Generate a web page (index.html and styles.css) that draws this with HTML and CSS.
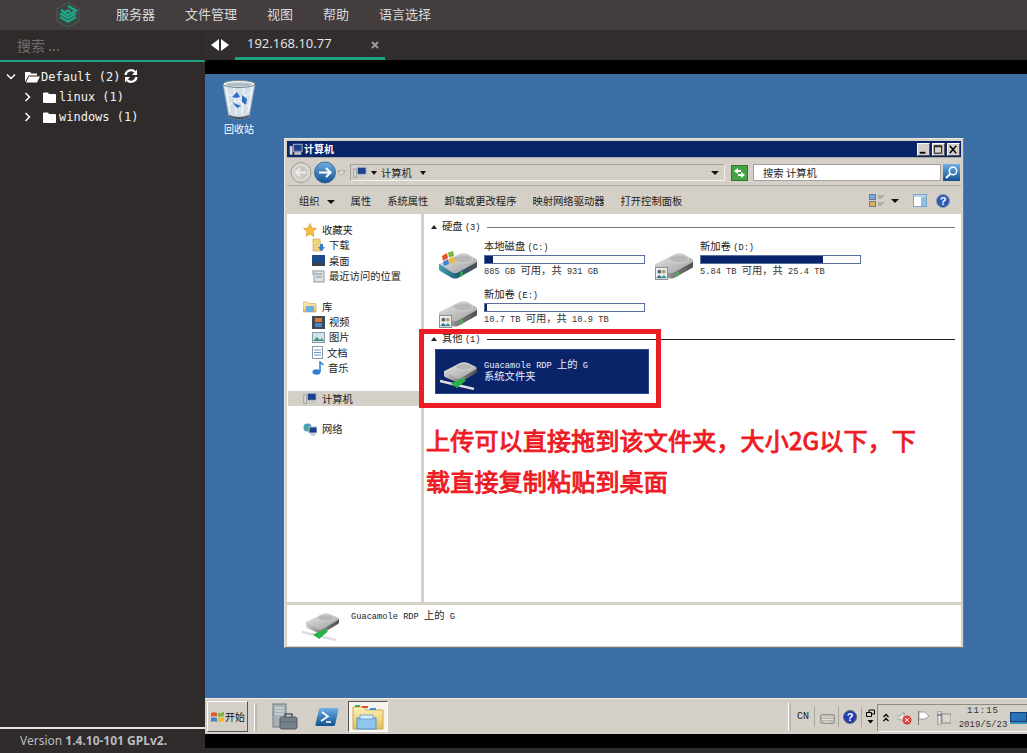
FILE: index.html
```html
<!DOCTYPE html>
<html lang="zh-CN">
<head>
<meta charset="utf-8">
<title>192.168.10.77</title>
<link rel="stylesheet" href="styles.css">
</head>
<body>
<svg class="defs" width="0" height="0" aria-hidden="true">
  <defs>
    <linearGradient id="gDrive" x1="0" y1="0" x2="1" y2="1"><stop offset="0" stop-color="#e8e8e8"/><stop offset="1" stop-color="#9c9c9c"/></linearGradient>
    <linearGradient id="gSide" x1="0" y1="0" x2="1" y2="0"><stop offset="0" stop-color="#d0d0d0"/><stop offset=".5" stop-color="#7d7d7d"/><stop offset="1" stop-color="#4f4f4f"/></linearGradient>
    <linearGradient id="gTeal" x1="0" y1="0" x2="1" y2="0"><stop offset="0" stop-color="#4aa0b8"/><stop offset=".5" stop-color="#1f5f78"/><stop offset="1" stop-color="#4f4f4f"/></linearGradient>
    <linearGradient id="gBlue" x1="0" y1="0" x2="0" y2="1"><stop offset="0" stop-color="#6fb0e6"/><stop offset="1" stop-color="#12508f"/></linearGradient>
    <linearGradient id="gFolder" x1="0" y1="0" x2="0" y2="1"><stop offset="0" stop-color="#fff2b8"/><stop offset="1" stop-color="#e4bf5c"/></linearGradient>
    <symbol id="drive" viewBox="0 0 40 30">
      <path d="M1 13 V18 Q1 19 2 20 L14 27 Q17 28 20 27 L38 17 Q39 16.500 39 15 V10Z" fill="url(#gSide)"/>
      <path d="M1.500 13 L21 3 Q26 1.500 30 3 L38 8 Q40 10 38 11.500 L20 21.500 Q17 23 14 21.500Z" fill="url(#gDrive)"/>
      <ellipse cx="25" cy="8" rx="10" ry="4" fill="#b8b8b8" stroke="#dedede" stroke-width=".6"/>
      <rect x="22.500" y="20.500" width="2" height="5" fill="#3fc24a"/>
    </symbol>
    <symbol id="driveC" viewBox="0 0 40 30">
      <path d="M1 13 V18 Q1 19 2 20 L14 27 Q17 28 20 27 L38 17 Q39 16.500 39 15 V10Z" fill="url(#gTeal)"/>
      <path d="M1.500 13 L21 3 Q26 1.500 30 3 L38 8 Q40 10 38 11.500 L20 21.500 Q17 23 14 21.500Z" fill="url(#gDrive)"/>
      <ellipse cx="25" cy="8" rx="10" ry="4" fill="#b8b8b8" stroke="#dedede" stroke-width=".6"/>
      <rect x="22.500" y="20.500" width="2" height="5" fill="#3fc24a"/>
    </symbol>
    <symbol id="share" viewBox="0 0 14 14">
      <rect x=".5" y=".5" width="13" height="13" fill="#eef0ee" stroke="#8a8a8a"/>
      <circle cx="4.800" cy="5" r="2.100" fill="#4f6a80"/><circle cx="9.500" cy="5" r="2.100" fill="#b59a6a"/>
      <path d="M1.500 12 Q4.500 6 7.500 12Z" fill="#3a6ea5"/><path d="M6.500 12 Q9.500 6 12.500 12Z" fill="#3d9c8b"/>
    </symbol>
    <symbol id="netdrive" viewBox="0 0 38 30">
      <path d="M5 11 V15 Q5 16 6 17 L17 22 Q19 23 22 22 L37 13 Q38 12.500 38 11 V8Z" fill="url(#gSide)"/>
      <path d="M5.500 11 L21 3 Q25 1.500 29 3 L36.500 6.500 Q38.500 8 36.500 9.500 L22 18 Q19 19.500 16.500 18Z" fill="url(#gDrive)"/>
      <ellipse cx="25" cy="7" rx="8.500" ry="3.300" fill="#b8b8b8" stroke="#dedede" stroke-width=".6"/>
      <rect x="23.500" y="17.500" width="1.800" height="4" fill="#3fc24a"/>
      <path d="M1 21 L35 29" stroke="#dedede" stroke-width="2.400"/>
      <path d="M12 23.500 L23 18.500 L27 20.500 L18 28Z" fill="#27b34a"/>
    </symbol>
    <symbol id="pc" viewBox="0 0 16 14">
      <rect x="5" y="1" width="10" height="8" fill="#1e3f8c" stroke="#b8c0cc"/>
      <rect x="1" y="3" width="3" height="10" fill="#dedede" stroke="#7d7d7d" stroke-width=".7"/>
      <rect x="6" y="10" width="8" height="3" fill="#c8c8c8"/>
    </symbol>
  </defs>
</svg>

<div class="app">
  <header class="topbar">
    <div class="logo">
      <svg width="24" height="26" viewBox="0 0 24 26">
        <path d="M12 .5 L23 6.700 V19.300 L12 25.500 L1 19.300 V6.700Z" fill="#3a4541" stroke="#4d5a55"/>
        <path d="M12 4 L20 8.500 L12 13 L8 10.800 L12 8.600 L14 9.600" fill="none" stroke="#1fa888" stroke-width="2.300"/>
        <path d="M4 11.500 L12 16 L20 11.500 M4 15 L12 19.500 L20 15 M5 8 L9 10.200" fill="none" stroke="#1fa888" stroke-width="2.300"/>
      </svg>
    </div>
    <nav class="menu">
      <span>服务器</span><span>文件管理</span><span>视图</span><span>帮助</span><span>语言选择</span>
    </nav>
  </header>

  <aside class="sidebar">
    <div class="search">搜索 ...</div>
    <ul class="tree">
      <li class="tree-row">
        <svg class="chev" width="10" height="8" viewBox="0 0 10 8"><path d="M1 1.500 L5 5.500 L9 1.500" fill="none" stroke="#fff" stroke-width="1.500"/></svg>
        <svg class="folder" width="15" height="12" viewBox="0 0 15 12"><path d="M0 11 V1 H5 L6.500 2.500 H12 V4.500 H3.500 Z" fill="#fff"/><path d="M1 11.500 L4 5.500 H15 L12 11.500Z" fill="#fff"/></svg>
        <span>Default (2)</span>
        <svg class="sync" width="14" height="14" viewBox="0 0 14 14"><path d="M1.500 6 A5.500 5.500 0 0 1 11 3 M12.500 8 A5.500 5.500 0 0 1 3 11" fill="none" stroke="#fff" stroke-width="2.200"/><path d="M13 .5 V6 H8Z M1 13.500 V8 H6Z" fill="#fff"/></svg>
      </li>
      <li class="tree-row sub">
        <svg class="chev" width="8" height="10" viewBox="0 0 8 10"><path d="M1.500 1 L5.500 5 L1.500 9" fill="none" stroke="#fff" stroke-width="1.500"/></svg>
        <svg class="folder" width="13" height="11" viewBox="0 0 13 11"><path d="M0 10 Q0 11 1 11 H12 Q13 11 13 10 V3 Q13 2 12 2 H6 L5 .5 H1 Q0 .5 0 1.500Z" fill="#fff"/></svg>
        <span>linux (1)</span>
      </li>
      <li class="tree-row sub">
        <svg class="chev" width="8" height="10" viewBox="0 0 8 10"><path d="M1.500 1 L5.500 5 L1.500 9" fill="none" stroke="#fff" stroke-width="1.500"/></svg>
        <svg class="folder" width="13" height="11" viewBox="0 0 13 11"><path d="M0 10 Q0 11 1 11 H12 Q13 11 13 10 V3 Q13 2 12 2 H6 L5 .5 H1 Q0 .5 0 1.500Z" fill="#fff"/></svg>
        <span>windows (1)</span>
      </li>
    </ul>
    <footer class="version">Version <b>1.4.10-101 GPLv2.</b></footer>
  </aside>

  <main class="session">
    <div class="tabs">
      <div class="arrows">
        <svg width="8" height="12" viewBox="0 0 8 12"><path d="M8 0 V12 L0 6Z" fill="#fff"/></svg>
        <svg width="8" height="12" viewBox="0 0 8 12"><path d="M0 0 V12 L8 6Z" fill="#fff"/></svg>
      </div>
      <div class="tab"><span>192.168.10.77</span><svg width="8" height="8" viewBox="0 0 8 8"><path d="M1 1 L7 7 M7 1 L1 7" stroke="#9a9a9a" stroke-width="2"/></svg></div>
    </div>
    <div class="band"></div>

    <div class="desktop">
      <div class="wallpaper">
        <div class="recycle">
          <svg width="36" height="42" viewBox="0 0 36 42">
            <path d="M2 5 L8 38 Q18 42 28 38 L34 5Z" fill="#d3dee6" stroke="#9fb1be" stroke-width=".7"/>
            <path d="M5 8 L9 33 M31 8 L27 33 M13 9 L15 36 M23 9 L21 36 M5 14 L18 20 L31 13 M7 26 L18 22 L29 28" stroke="#f2f6f8" stroke-width="1.300" fill="none"/>
            <ellipse cx="18" cy="5" rx="16" ry="3.500" fill="#eef2f4" stroke="#75868f"/>
            <ellipse cx="18" cy="5.500" rx="13" ry="2" fill="#aebcc5"/>
            <path d="M8 36 Q18 40 28 36 L28 38 Q18 42.500 8 38Z" fill="#4c565f"/>
            <path d="M11 18 L16 13 L19 18 L15 19Z M21 16 L26 20 L25 26 L21 23Z M11 23 L16 29 L20 27 L15 25Z" fill="#2f6ccb"/>
          </svg>
          <span>回收站</span>
        </div>

        <section class="window">
          <div class="titlebar">
            <svg class="t-ico" width="14" height="13"><use href="#pc"/></svg>
            <span class="t-text">计算机</span>
            <div class="winbtns">
              <span class="winbtn"><svg width="13" height="11" viewBox="0 0 13 11"><rect x="3" y="8" width="6" height="2" fill="#000"/></svg></span>
              <span class="winbtn"><svg width="13" height="11" viewBox="0 0 13 11"><path d="M2.500 1.500 H10.500 V9.500 H2.500Z M2.500 2.500 H10.500" fill="none" stroke="#000"/></svg></span>
              <span class="winbtn"><svg width="13" height="11" viewBox="0 0 13 11"><path d="M3 1.500 L10 9.500 M10 1.500 L3 9.500" stroke="#000" stroke-width="1.600"/></svg></span>
            </div>
          </div>

          <div class="navbar">
            <svg class="navbtns" width="56" height="23" viewBox="0 0 56 23">
              <circle cx="11" cy="11.500" r="10" fill="#d9d7d2" stroke="#9d9d9d"/>
              <circle cx="11" cy="11.500" r="6.500" fill="#c9c7c2"/>
              <path d="M6 11.500 H16 M10 7.500 L6 11.500 L10 15.500" fill="none" stroke="#eee" stroke-width="2"/>
              <circle cx="35" cy="11.500" r="10.500" fill="url(#gBlue)" stroke="#3d6d9c"/>
              <path d="M29 11.500 H40 M36 7 L40.500 11.500 L36 16" fill="none" stroke="#fff" stroke-width="2.200"/>
              <path d="M48 10 H55 L51.500 14Z" fill="#f2f2f2" stroke="#888" stroke-width=".7"/>
            </svg>
            <div class="address">
              <svg width="14" height="13"><use href="#pc"/></svg>
              <i class="caret"></i>
              <span>计算机</span>
              <i class="caret"></i>
              <i class="caret end"></i>
            </div>
            <span class="go"><svg width="17" height="16" viewBox="0 0 17 16"><rect x=".5" y=".5" width="16" height="15" fill="#45a345" stroke="#2f7a2f"/><path d="M3 6 L7 3 V5 H10 V7 H7 V9Z M14 10 L10 13 V11 H7 V9 H10 V7Z" fill="#fff"/></svg></span>
            <div class="searchbox">搜索 计算机</div>
            <span class="searchbtn"><svg width="17" height="17" viewBox="0 0 17 17"><rect width="17" height="17" fill="url(#gBlue)"/><circle cx="10" cy="7" r="3.700" fill="none" stroke="#fff" stroke-width="1.500"/><path d="M7 10 L3 14" stroke="#fff" stroke-width="2"/></svg></span>
          </div>

          <div class="cmdbar">
            <span class="cmd">组织<i class="caret wide"></i></span>
            <span class="cmd">属性</span>
            <span class="cmd">系统属性</span>
            <span class="cmd">卸载或更改程序</span>
            <span class="cmd">映射网络驱动器</span>
            <span class="cmd">打开控制面板</span>
            <div class="cmd-right">
              <svg width="16" height="13" viewBox="0 0 16 13"><rect x=".5" y=".5" width="6" height="5" fill="#6fa8dc" stroke="#778"/><rect x=".5" y="7.500" width="6" height="5" fill="#d9b45b" stroke="#778"/><path d="M9 2 H15 M9 4 H13 M9 9 H15 M9 11 H13" stroke="#8b8b8b"/></svg>
              <i class="caret"></i>
              <svg class="cr-panel" width="14" height="13" viewBox="0 0 14 13"><rect x=".5" y=".5" width="13" height="12" fill="#fff" stroke="#7da2c4"/><rect x="8" y="1" width="5" height="11" fill="#8cc3e4"/><rect x="1" y="1" width="12" height="2" fill="#b9d5e9"/></svg>
              <svg class="cr-help" width="14" height="14" viewBox="0 0 14 14"><circle cx="7" cy="7" r="6.500" fill="#2f58b5" stroke="#8a93a8"/><text x="7" y="11" text-anchor="middle" class="qmark">?</text></svg>
            </div>
          </div>

          <div class="panes">
            <div class="navpane">
              <div class="np-row top"><svg width="14" height="14" viewBox="0 0 14 14"><path d="M7 .5 L9 5 L13.500 5.500 L10 8.500 L11 13.500 L7 11 L3 13.500 L4 8.500 L.5 5.500 L5 5Z" fill="#f2c03e" stroke="#d88b20" stroke-width=".6"/></svg><span>收藏夹</span></div>
              <div class="np-row child"><svg width="13" height="14" viewBox="0 0 13 14"><path d="M1 1 H8 L9 13 H1Z" fill="#efd27b" stroke="#c0a050" stroke-width=".6"/><path d="M8 6 H11 V9 H13 L9.500 13.500 L6 9 H8Z" fill="#2f7fcf"/></svg><span>下载</span></div>
              <div class="np-row child"><svg width="13" height="11" viewBox="0 0 13 11"><rect width="13" height="11" fill="#1d4a8a"/><rect y="8" width="13" height="3" fill="#3a3f45"/></svg><span>桌面</span></div>
              <div class="np-row child"><svg width="13" height="13" viewBox="0 0 13 13"><rect x="2" y="1" width="10" height="11" fill="#dfe3e6" stroke="#8d979f"/><path d="M4 4 H10 M4 7 H10" stroke="#7e8a92"/><rect y="0" width="4" height="5" fill="#b9c4cc"/></svg><span>最近访问的位置</span></div>
              <div class="np-row top gap"><svg width="14" height="13" viewBox="0 0 14 13"><path d="M0 2 H5 L6 3.500 H13 V12 H0Z" fill="url(#gFolder)" stroke="#c0a050" stroke-width=".6"/><rect x="3" y="6" width="8" height="6" fill="#6eb0dc"/></svg><span>库</span></div>
              <div class="np-row child"><svg width="13" height="13" viewBox="0 0 13 13"><rect width="13" height="13" fill="#3c4a55"/><rect x="3" y="2" width="7" height="4" fill="#d97c35"/><rect x="3" y="7" width="7" height="4" fill="#4f86c6"/></svg><span>视频</span></div>
              <div class="np-row child"><svg width="13" height="11" viewBox="0 0 13 11"><rect x=".5" y=".5" width="12" height="10" fill="#cfe3ef" stroke="#8a9aa6"/><path d="M1 9 L5 5 L8 8 L10 6 L12 9Z" fill="#4c8f6b"/></svg><span>图片</span></div>
              <div class="np-row child"><svg width="11" height="13" viewBox="0 0 11 13"><rect x=".5" y=".5" width="10" height="12" fill="#fff" stroke="#8a9aa6"/><path d="M2 4 H9 M2 6.500 H9 M2 9 H9" stroke="#6f9ccc"/></svg><span>文档</span></div>
              <div class="np-row child"><svg width="12" height="14" viewBox="0 0 12 14"><ellipse cx="4.500" cy="11" rx="4" ry="2.700" fill="#2f7fcf"/><path d="M8 11 V1 L11.500 4" fill="none" stroke="#2f7fcf" stroke-width="1.500"/></svg><span>音乐</span></div>
              <div class="np-row top gap selected"><svg width="14" height="13"><use href="#pc"/></svg><span>计算机</span></div>
              <div class="np-row top gap"><svg width="14" height="13" viewBox="0 0 14 13"><circle cx="4.500" cy="4.500" r="4" fill="#3f9ad6"/><path d="M2 3 L5 2 L6 6 L3 7Z" fill="#58ad5b"/><rect x="6" y="4" width="8" height="6" fill="#1e3f8c" stroke="#b8c0cc"/><rect x="8" y="10.500" width="4" height="2" fill="#b8c0cc"/></svg><span>网络</span></div>
            </div>

            <div class="content">
              <div class="group-head"><i class="tri"></i><span>硬盘 <em>(3)</em></span><hr></div>
              <div class="drives">
                <div class="drive">
                  <svg class="drive-ico" width="40" height="30" viewBox="0 0 40 30">
                    <use href="#driveC" width="40" height="30"/>
                    <path d="M4 5 L9 2 L10 7 L5 10Z" fill="#e2552b"/><path d="M10 1.500 L15 0 L16 5 L11 6.500Z" fill="#7ab53c"/><path d="M5 11 L10 8 L11 13 L6 15Z" fill="#3c84d2"/><path d="M11 7.500 L16 6 L17 11 L12 12.500Z" fill="#f1b92c"/>
                  </svg>
                  <div class="info"><div class="name">本地磁盘 <span class="lat">(C:)</span></div><div class="bar"><i style="width:5%"></i></div><div class="free"><span class="lat">885 GB </span>可用，共<span class="lat"> 931 GB</span></div></div>
                </div>
                <div class="drive">
                  <svg class="drive-ico" width="40" height="30" viewBox="0 0 40 30">
                    <use href="#drive" width="40" height="30"/><use href="#share" x="1" y="16" width="13" height="13"/>
                  </svg>
                  <div class="info"><div class="name">新加卷 <span class="lat">(D:)</span></div><div class="bar"><i style="width:77%"></i></div><div class="free"><span class="lat">5.84 TB </span>可用，共<span class="lat"> 25.4 TB</span></div></div>
                </div>
                <div class="drive">
                  <svg class="drive-ico" width="40" height="30" viewBox="0 0 40 30">
                    <use href="#drive" width="40" height="30"/><use href="#share" x="1" y="16" width="13" height="13"/>
                  </svg>
                  <div class="info"><div class="name">新加卷 <span class="lat">(E:)</span></div><div class="bar"><i style="width:1%"></i></div><div class="free"><span class="lat">10.7 TB </span>可用，共<span class="lat"> 10.9 TB</span></div></div>
                </div>
              </div>
              <div class="group-head other"><i class="tri"></i><span>其他 <em>(1)</em></span><hr></div>
              <div class="sel-tile">
                <svg width="38" height="30"><use href="#netdrive"/></svg>
                <div class="sel-text"><div><span class="lat">Guacamole RDP </span>上的<span class="lat"> G</span></div><div>系统文件夹</div></div>
              </div>
            </div>
          </div>

          <div class="details">
            <svg class="det-ico" width="38" height="30"><use href="#netdrive"/></svg>
            <div class="det-text"><span class="lat">Guacamole RDP </span>上的<span class="lat"> G</span></div>
          </div>
        </section>

        <div class="redbox"></div>
        <p class="note">上传可以直接拖到该文件夹，大小2G以下，下<br>载直接复制粘贴到桌面</p>
      </div>

      <div class="taskbar">
        <button class="start">
          <svg width="13" height="12" viewBox="0 0 13 12"><path d="M0 2 Q3 .5 6 2 V5.500 Q3 4.500 0 6Z" fill="#e2552b"/><path d="M7 2 Q10 3 13 .5 V4.500 Q10 6.500 7 5.500Z" fill="#7ab53c"/><path d="M0 7 Q3 5.500 6 7 V11 Q3 9.500 0 11Z" fill="#3c84d2"/><path d="M7 6.500 Q10 7.500 13 5.500 V9.500 Q10 11.500 7 10.500Z" fill="#f1b92c"/></svg>
          <span>开始</span>
        </button>
        <i class="tb-sep"></i>
        <svg class="tb-server" width="26" height="28" viewBox="0 0 26 28"><rect x="1" y="1" width="13" height="23" fill="#a9b2b8" stroke="#6f7a82"/><path d="M3 5 H12 M3 8 H12 M3 11 H12" stroke="#e2e6e8"/><rect x="8" y="14" width="17" height="12" rx="2" fill="#76828b" stroke="#4f5961"/><path d="M13 14 V11 H20 V14" fill="none" stroke="#4f5961" stroke-width="1.500"/><path d="M8 19 H25" stroke="#5a646c"/></svg>
        <svg class="tb-ps" width="24" height="20" viewBox="0 0 24 20"><path d="M6 1 H22 Q24 1 23.500 3 L20 18 Q19.500 19 18 19 H2 Q0 19 .5 17 L4 2 Q4.500 1 6 1Z" fill="url(#gBlue)"/><path d="M7 5 L13 9.500 L6 14 M11 15 H16" fill="none" stroke="#fff" stroke-width="1.600"/></svg>
        <span class="tb-active"><svg width="32" height="26" viewBox="0 0 32 26"><path d="M1 3 H12 L14 6 H31 V25 H1Z" fill="url(#gFolder)" stroke="#c9a850"/><rect x="3" y="1" width="5" height="2" fill="#3fb04a"/><rect x="10" y="2" width="6" height="2" fill="#d9523a"/><rect x="18" y="4" width="6" height="2" fill="#3f8fd9"/><rect x="5" y="14" width="19" height="11" fill="#8ec6ec" stroke="#4f93cc"/><rect x="8" y="11" width="13" height="4" fill="#d5eafa" stroke="#4f93cc" stroke-width=".7"/></svg></span>
        <div class="tb-spacer"></div>
        <i class="tb-sep"></i>
        <span class="lang">CN</span>
        <i class="tb-thin"></i>
        <svg class="tb-kbd" width="15" height="14" viewBox="0 0 15 14"><rect x=".5" y="4.500" width="14" height="9" rx="1" fill="#b9b6af" stroke="#989590"/><path d="M2 7 H13 M2 9.500 H13 M4 12 H11 M8 4 L11 1" stroke="#e5e3de"/></svg>
        <i class="tb-thin"></i>
        <svg class="tb-help" width="14" height="14" viewBox="0 0 14 14"><circle cx="7" cy="7" r="6.500" fill="#1e3db5" stroke="#6a6a6a"/><text x="7" y="11" text-anchor="middle" class="qmark">?</text></svg>
        <i class="tb-thin"></i>
        <svg class="tb-restore" width="9" height="15" viewBox="0 0 9 15"><path d="M.5 3.500 H5.500 V7.500 H.5Z M3 3 V1 H8.500 V5 H6" fill="none" stroke="#000"/><path d="M1.500 11 H7.500 L4.500 14.500Z" fill="#000"/></svg>
        <div class="tray">
          <svg width="6" height="9" viewBox="0 0 6 9"><path d="M.5 4 L3 1.500 L5.500 4 M.5 8 L3 5.500 L5.500 8" fill="none" stroke="#000" stroke-width="1.300"/></svg>
          <svg class="t1" width="15" height="14" viewBox="0 0 15 14"><path d="M0 5 H3 L7 1 V11 L3 8 H0Z" fill="#e8e6e0" stroke="#8a8a8a" stroke-width=".7"/><circle cx="10" cy="9" r="4.500" fill="#e2403a"/><path d="M8 7 L12 11 M12 7 L8 11" stroke="#fff"/></svg>
          <svg class="t2" width="13" height="14" viewBox="0 0 13 14"><path d="M1.500 0 V14" stroke="#777"/><path d="M2 1 H8 L12 5 L8 8 H2Z" fill="#fff" stroke="#888" stroke-width=".8"/></svg>
          <svg class="t3" width="14" height="14" viewBox="0 0 14 14"><rect x="5" y="3" width="9" height="9" fill="#d8d8d3" stroke="#888"/><rect x="1" y="0" width="3" height="14" fill="#eee" stroke="#777" stroke-width=".8"/><path d="M0 4 H5" stroke="#555"/></svg>
          <div class="clock"><div class="time">11:15</div><div>2019/5/23</div></div>
          <svg class="t4" width="17" height="12" viewBox="0 0 17 12"><rect width="17" height="12" fill="#2b73b8"/><rect y="9" width="17" height="3" fill="#3a91b8"/><rect x=".5" y=".5" width="16" height="9" fill="none" stroke="#123f78"/></svg>
        </div>
      </div>
      <div class="band-bottom"></div>
      <div class="band-end"></div>
    </div>
  </main>
</div>
</body>
</html>
```
FILE: styles.css
```css
* { box-sizing: border-box; }
html, body { margin: 0; height: 100%; overflow: hidden; }
body { font-family: "Noto Sans CJK SC", "Liberation Sans", sans-serif; background: #2f2b2b; }
.defs { position: absolute; }
ul { list-style: none; margin: 0; padding: 0; }
i, em { font-style: normal; }

.app { display: grid; grid-template-columns: 205px 1fr; grid-template-rows: 30px 723px; width: 1027px; height: 753px; }

/* top bar */
.topbar { grid-column: 1 / 3; display: flex; align-items: center; background: #443d3d; color: #d9d9d9; padding-left: 56px; }
.logo { display: flex; width: 60px; }
.menu { display: flex; gap: 30px; margin-top: -3px; font-size: 13px; }

/* sidebar */
.sidebar { display: flex; flex-direction: column; background: #2f2b2b; }
.search { height: 32px; padding: 5px 0 0 17px; background: #2f2b2b; border-bottom: 2px solid #1fa085; color: #6f6f6f; font-size: 14px; line-height: 20px; }
.tree { flex: 1; padding-top: 5px; font-family: "DejaVu Sans Mono", monospace; font-size: 12px; color: #f4f4f4; }
.tree-row { display: flex; align-items: center; height: 20px; padding-left: 6px; }
.tree-row .chev { margin-right: 9px; }
.tree-row .folder { margin-right: 1px; }
.tree-row.sub { padding-left: 24px; }
.tree-row.sub .chev { margin-right: 11px; }
.tree-row.sub .folder { margin-right: 3px; }
.sync { margin: -3px 0 0 4px; }
.version { height: 26px; border-top: 2px solid #e4e4e4; padding: 3px 0 0 20px; color: #b9bcc0; font: 12px/18px "Noto Sans", sans-serif; }
.version b { font-weight: 700; }

/* session */
.session { display: flex; flex-direction: column; min-width: 0; }
.tabs { display: flex; height: 30px; background: #332e2e; }
.arrows { display: flex; gap: 2px; width: 30px; padding: 9px 0 0 6px; }
.arrows svg { display: block; }
.tab { display: flex; justify-content: space-between; width: 150px; height: 30px; padding: 3px 6px 0 12px; border-bottom: 3px solid #1fa085; color: #e8e8e8; font: 13px/20px "Open Sans", "Liberation Sans", sans-serif; }
.tab svg { margin-top: 8px; }
.band { height: 14px; background: #000; }
.desktop { display: flex; flex-direction: column; flex: 1; }
.wallpaper { position: relative; height: 624px; background: #3a6ea5; }

.recycle { position: absolute; left: 17px; top: 5px; width: 34px; display: flex; flex-direction: column; align-items: center; color: #fff; font-size: 10px; line-height: 14px; }
.recycle svg { margin-bottom: 1px; }

/* window */
.window { position: absolute; left: 79px; top: 64px; width: 680px; height: 510px; display: flex; flex-direction: column; padding: 2px 2px 1px; background: #d4d0c8; border: 1px solid #e9e7e2; border-right-color: #777; border-bottom-color: #777; color: #222; font-size: 10.3px; line-height: 14px; }
.lat { font-family: "Liberation Mono", monospace; font-size: 8.7px; }
.titlebar { display: flex; align-items: center; height: 16px; flex: none; padding: 0 1px 0 2px; background: #0a246a; color: #fff; }
.t-ico { margin-right: 1px; }
.t-text { font-weight: 700; font-size: 10px; }
.winbtns { display: flex; gap: 2px; margin-left: auto; }
.winbtn { display: flex; width: 13px; height: 13px; background: #d4d0c8; border: 1px solid; border-color: #fff #555 #555 #fff; }
.winbtn svg { display: block; margin-left: -1px; }

.navbar { display: flex; align-items: center; height: 29px; flex: none; padding: 2px 1px 0 3px; border-bottom: 1px solid #aaa7a0; border-top: 1px solid #aaa7a0; }
.navbtns { margin-right: 4px; flex: none; }
.address { display: flex; align-items: center; width: 375px; height: 17px; padding-left: 2px; background: #d4d0c8; border: 1px solid #a5a29b; border-right-color: #f2f1ee; border-bottom-color: #f2f1ee; }
.address span { margin: 0 4px; }
.caret { display: inline-block; width: 0; height: 0; margin-left: 4px; border: 3px solid transparent; border-top: 4px solid #111; border-bottom: 0; }
.caret.end { margin-left: auto; margin-right: 5px; border-width: 4px 4px 0; }
.caret.wide { margin-left: 7px; border-width: 4px 4px 0; vertical-align: 1px; }
.go { display: flex; margin-left: 6px; }
.searchbox { width: 188px; height: 17px; margin-left: 5px; padding-left: 9px; background: #fff; border: 1px solid #a5a29b; line-height: 15px; }
.searchbtn { display: flex; margin-left: 2px; }

.cmdbar { display: flex; align-items: center; height: 28px; flex: none; padding: 1px 0 0 12px; }
.cmd { margin-right: 16px; white-space: nowrap; }
.cmd-right { display: flex; align-items: center; margin-left: auto; padding-right: 11px; }
.cmd-right .caret { border-width: 4px 4px 0; margin: 0 0 0 6px; }
.cr-panel { margin-left: 14px; }
.cr-help { margin-left: 9px; }
.qmark { font: 700 11px "Liberation Sans", sans-serif; fill: #fff; }

.panes { display: flex; flex: 1; min-height: 0; margin-bottom: 3px; }
.navpane { width: 134px; padding-top: 8.5px; background: #fff; margin-right: 3px; flex: none; }
.np-row { display: flex; align-items: center; height: 15.33px; padding-left: 17px; gap: 4px; }
.np-row svg { flex: none; }
.np-row.top { padding-left: 16px; gap: 5px; }
.np-row.child { padding-left: 25px; gap: 4px; }
.np-row.gap { margin-top: 15.33px; }
.np-row.selected { background: #d4d0c8; margin-left: 1px; padding-left: 15px; }
.content { flex: 1; padding-top: 6px; background: #fff; min-width: 0; }
.group-head { display: flex; align-items: center; height: 14px; padding: 0 6px 0 7px; }
.group-head em { font-family: "Liberation Mono", monospace; font-size: 8.7px; }
.group-head hr { flex: 1; height: 1px; margin: 0 0 0 6px; border: 0; background: #777; }
.group-head.other hr { background: #222; }
.tri { width: 0; height: 0; margin-right: 5px; border: 3px solid transparent; border-bottom: 4px solid #222; border-top: 0; }
.drives { display: grid; grid-template-columns: 216px 216px; grid-auto-rows: 48px; height: 98px; padding: 5px 0 0 14px; }
.drive { display: flex; gap: 6px; }
.drive-ico { margin-top: 12px; flex: none; overflow: visible; }
.info { width: 161px; }
.name { height: 14px; line-height: 14px; }
.bar { height: 9px; margin-top: 2px; background: #fff; border: 1px solid #5a6e9e; }
.bar i { display: block; height: 100%; background: #0a246a; }
.free { height: 12px; line-height: 12px; color: #333; }
.sel-tile { display: flex; align-items: center; gap: 7px; width: 214px; height: 45px; margin: 3px 0 0 11px; padding: 6px 0 0 3px; background: #0a246a; border: 1px solid #2a4a8c; color: #eef; }
.sel-text { align-self: flex-start; margin-top: 2px; }
.sel-text div { height: 12px; line-height: 12px; }
.details { display: flex; gap: 12px; height: 41px; flex: none; padding: 5px 0 0 14px; background: #fff; }
.det-ico { margin-top: 1px; }
.det-text { margin-top: -2px; }

.redbox { position: absolute; left: 214px; top: 255px; width: 242px; height: 79px; border: 5px solid #ed1c24; }
.note { position: absolute; left: 221px; top: 345px; width: 500px; margin: 0; color: #ed1c24; font-size: 24px; letter-spacing: .2px; line-height: 41px; white-space: nowrap; -webkit-text-stroke: 1px #ed1c24; }

/* taskbar */
.taskbar { display: flex; align-items: center; height: 36px; padding: 0 0 0 2px; background: #d4d0c8; border-top: 1px solid #efede8; }
.start { display: flex; align-items: center; gap: 1px; width: 41px; height: 31px; padding: 0 0 0 3px; background: #d4d0c8; border: 1px solid; border-color: #fff #555 #555 #fff; color: #111; font: 10px "Noto Sans CJK SC", sans-serif; }
.tb-sep { width: 3px; height: 28px; margin-left: 6px; background: #bdbab3; border-left: 1px solid #fff; }
.tb-server { margin-left: 15px; }
.tb-ps { margin-left: 17px; }
.tb-active { display: flex; align-items: center; justify-content: center; width: 40px; height: 31px; margin-left: 9px; background: #f5f4f1; border: 1px solid #55524c; border-right-color: #fff; border-bottom-color: #fff; }
.tb-spacer { flex: 1; }
.lang { margin: 0 5px 0 6px; font: 10px "Liberation Mono", monospace; color: #222; }
.tb-thin { width: 1px; height: 20px; background: #a9a6a0; }
.tb-kbd { margin: 0 3px 0 5px; }
.tb-help { margin: 0 4px; }
.tb-restore { margin: 0 0 0 4px; }
.tray { display: flex; align-items: center; width: 150px; height: 28px; margin: 2px 0 0 2px; padding-left: 5px; border: 1px solid #8f8c85; border-right: 0; border-bottom-color: #f2f1ee; }
.t1 { margin-left: 8px; }
.t2 { margin-left: 5px; }
.t3 { margin-left: 7px; }
.clock { width: 50px; margin-left: 7px; font: 9px/14px "Liberation Mono", monospace; text-align: center; color: #333; }
.time { letter-spacing: 1px; }
.t4 { margin-left: 2px; }
.band-bottom { height: 14px; background: #000; }
.band-end { flex: 1; background: #2f2b2b; }
```
